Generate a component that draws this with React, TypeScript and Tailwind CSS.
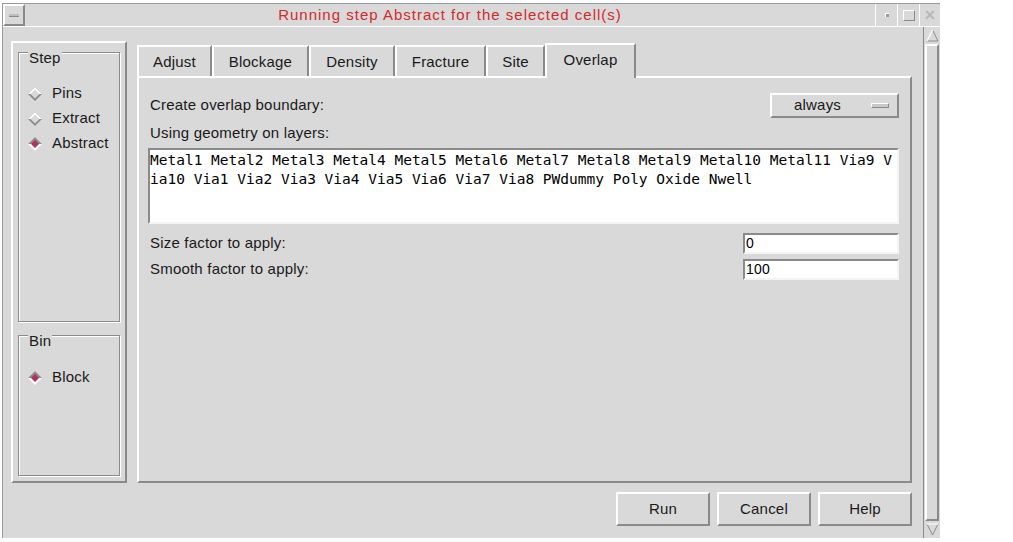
import React from 'react';

const raised = 'border-2 border-t-white border-l-white border-r-[#8a8a8a] border-b-[#8a8a8a]';
const sunken = 'border-2 border-t-[#8a8a8a] border-l-[#8a8a8a] border-r-[#f4f4f4] border-b-[#f4f4f4]';
const etched = 'border border-[#8c8c8c] shadow-[inset_1px_1px_0_#ffffff,1px_1px_0_#ffffff]';

const Diamond = ({ on }: { on: boolean }) => (
  <svg width="16" height="16" viewBox="0 0 16 16">
    {on ? (
      <>
        <polygon points="8,1 15,8 8,15 1,8" fill="#ffffff" />
        <polygon points="8,1 15,8 1,8" fill="#8a8a8a" />
        <polygon points="8,4 12,8 8,12 4,8" fill="#b5305f" />
      </>
    ) : (
      <>
        <polygon points="8,1 15,8 8,15 1,8" fill="#8a8a8a" />
        <polygon points="8,1 15,8 1,8" fill="#ffffff" />
        <polygon points="8,3.5 12.5,8 8,12.5 3.5,8" fill="#d9d9d9" />
      </>
    )}
  </svg>
);

const Radio = ({ label, on }: { label: string; on: boolean }) => (
  <div className="flex items-center h-[25px] pl-[8px]">
    <Diamond on={on} />
    <span className="ml-[9px]">{label}</span>
  </div>
);

const tabs = [
  { name: 'Adjust', w: 'w-[75px]' },
  { name: 'Blockage', w: 'w-[97px]' },
  { name: 'Density', w: 'w-[86px]' },
  { name: 'Fracture', w: 'w-[91px]' },
  { name: 'Site', w: 'w-[59px]' },
];

const App: React.FC = () => {
  return (
    <div
      className="w-[1013px] h-[542px] bg-white overflow-hidden text-[15px] text-[#1a1a1a] tracking-[0.2px]"
      style={{ fontFamily: '"Liberation Sans", Arial, sans-serif' }}
    >
      <div className="ml-[2px] mt-[3px] w-[938px] h-[535px] bg-[#d9d9d9] flex flex-col border-l border-[#9a9a9a]">
        {/* Title bar */}
        <div className="h-[24px] flex border-t border-[#9a9a9a] border-b border-b-white">
          <div className={`w-[22px] ${raised} border flex items-center justify-center`}>
            <div className="w-[10px] h-[3px] bg-[#bdbdbd] border-b border-[#8a8a8a]" />
          </div>
          <div className="flex-1 flex items-center justify-center text-[#d42a2a] text-[15px] tracking-[1px]">
            Running step Abstract for the selected cell(s)
          </div>
          <div className="w-[22px] border-l border-white flex items-center justify-center">
            <div className="w-[4px] h-[4px] bg-[#9a9a9a] border-t border-l border-white" />
          </div>
          <div className="w-[22px] border-l border-white flex items-center justify-center">
            <div className="w-[12px] h-[11px] border border-t-white border-l-white border-r-[#8a8a8a] border-b-[#8a8a8a]" />
          </div>
          <div className="w-[21px] border-l border-white flex items-center justify-center text-[#b8b8b8] text-[14px] font-bold">
            ✕
          </div>
        </div>

        {/* Body */}
        <div className="flex-1 flex">
          <div className="flex-1 flex flex-col pl-[8px] pr-[11px] pt-[14px]">
            <div className="flex">
              {/* Left column */}
              <div className={`w-[116px] h-[442px] ${raised} px-[5px] pt-[9px] pb-[5px] flex flex-col`}>
                <div className={`relative h-[270px] ${etched} pt-[28px]`}>
                  <span className="absolute left-[9px] top-[-2px] bg-[#d9d9d9] px-[1px] leading-[13px]">Step</span>
                  <Radio label="Pins" on={false} />
                  <Radio label="Extract" on={false} />
                  <Radio label="Abstract" on />
                </div>
                <div className={`relative mt-[13px] flex-1 ${etched} pt-[29px]`}>
                  <span className="absolute left-[9px] top-[-2px] bg-[#d9d9d9] px-[1px] leading-[13px]">Bin</span>
                  <Radio label="Block" on />
                </div>
              </div>

              {/* Right column */}
              <div className="ml-[10px] flex-1 flex flex-col">
                <div className="flex items-end h-[35px]">
                  {tabs.map((t) => (
                    <div
                      key={t.name}
                      className={`${t.w} h-[31px] border-t-2 border-l-2 border-r-2 border-t-white border-l-white border-r-[#8a8a8a] flex items-center justify-center pt-[2px]`}
                    >
                      {t.name}
                    </div>
                  ))}
                  <div className="relative z-10 w-[91px] h-[35px] -mb-[2px] bg-[#d9d9d9] border-t-2 border-l-2 border-r-2 border-t-white border-l-white border-r-[#8a8a8a] flex items-center justify-center pb-[3px]">
                    Overlap
                  </div>
                </div>
                <div className={`h-[407px] ${raised} pl-[9px] pr-[11px] flex flex-col`}>
                  <div className="mt-[15px] h-[25px] flex items-center justify-between">
                    <span className="pl-[2px]">Create overlap boundary:</span>
                    <div className={`w-[129px] h-[25px] ${raised} flex items-center pl-[22px] pr-[8px]`}>
                      <span className="flex-1">always</span>
                      <div className="w-[18px] h-[5px] bg-[#c8c8c8] border-t border-l border-white border-b border-r border-b-[#8a8a8a] border-r-[#8a8a8a]" />
                    </div>
                  </div>
                  <div className="mt-[5px] h-[20px] flex items-center pl-[2px]">Using geometry on layers:</div>
                  <div
                    className={`mt-[5px] h-[76px] bg-white ${sunken} pt-[1px] text-[14.5px] leading-[19px] tracking-normal text-black break-all`}
                    style={{ fontFamily: '"DejaVu Sans Mono", "Liberation Mono", monospace' }}
                  >
                    Metal1 Metal2 Metal3 Metal4 Metal5 Metal6 Metal7 Metal8 Metal9 Metal10 Metal11 Via9 V
                    <br />
                    ia10 Via1 Via2 Via3 Via4 Via5 Via6 Via7 Via8 PWdummy Poly Oxide Nwell
                  </div>
                  <div className="mt-[9px] h-[21px] flex items-center justify-between">
                    <span className="pl-[2px]">Size factor to apply:</span>
                    <div className={`w-[156px] h-[21px] bg-white ${sunken} flex items-center pl-[1px] text-[14px] text-black`}>0</div>
                  </div>
                  <div className="mt-[5px] h-[21px] flex items-center justify-between">
                    <span className="pl-[2px]">Smooth factor to apply:</span>
                    <div className={`w-[156px] h-[21px] bg-white ${sunken} flex items-center pl-[1px] text-[14px] text-black`}>100</div>
                  </div>
                </div>
              </div>
            </div>

            {/* Bottom buttons */}
            <div className="mt-[9px] flex justify-end gap-[7px]">
              {['Run', 'Cancel', 'Help'].map((b) => (
                <div key={b} className={`w-[94px] h-[34px] ${raised} flex items-center justify-center`}>
                  {b}
                </div>
              ))}
            </div>
          </div>

          {/* Scrollbar */}
          <div className="w-[17px] flex flex-col border-l border-[#8a8a8a] bg-[#d9d9d9]">
            <div className="h-[17px] flex items-center justify-center">
              <svg width="13" height="13" viewBox="0 0 13 13">
                <polygon points="6.5,1 12,12 1,12" fill="#d9d9d9" stroke="#8a8a8a" strokeWidth="1" />
                <polyline points="1,12 6.5,1" fill="none" stroke="#ffffff" strokeWidth="1.5" />
              </svg>
            </div>
            <div className={`flex-1 ${raised} mx-[1px]`} />
            <div className="h-[17px] flex items-center justify-center">
              <svg width="13" height="13" viewBox="0 0 13 13">
                <polygon points="1,1 12,1 6.5,12" fill="#d9d9d9" stroke="#8a8a8a" strokeWidth="1" />
                <polyline points="1,1 12,1" fill="none" stroke="#ffffff" strokeWidth="1.5" />
              </svg>
            </div>
          </div>
        </div>
      </div>
    </div>
  );
};

export default App;
